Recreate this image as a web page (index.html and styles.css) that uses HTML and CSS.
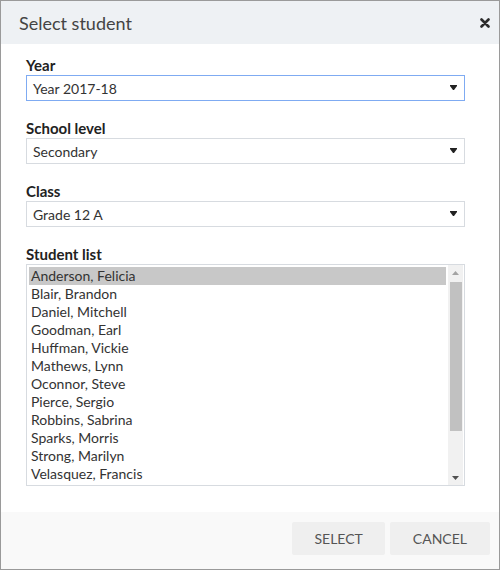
FILE: index.html
```html
<!DOCTYPE html>
<html lang="en">
<head>
<meta charset="utf-8">
<title>Select student</title>
<link rel="stylesheet" href="styles.css">
</head>
<body>
<div class="dialog">
  <div class="dialog-header">
    <span class="dialog-title">Select student</span>
    <svg class="close-icon" width="10" height="10" viewBox="0 0 10 10" aria-label="Close">
      <path d="M1.5 1.5 L8.5 8.5 M8.5 1.5 L1.5 8.5" stroke="#2b2b2b" stroke-width="2.6" stroke-linecap="round"/>
    </svg>
  </div>
  <div class="dialog-body">
    <div class="field">
      <div class="field-label">Year</div>
      <div class="select select-focused">
        <span>Year 2017-18</span>
        <svg class="select-arrow" width="7" height="6" viewBox="0 0 7 6"><path d="M0 0 H7 V1 L4 5 H3 L0 1 Z" fill="#222"/></svg>
      </div>
    </div>
    <div class="field">
      <div class="field-label">School level</div>
      <div class="select">
        <span>Secondary</span>
        <svg class="select-arrow" width="7" height="6" viewBox="0 0 7 6"><path d="M0 0 H7 V1 L4 5 H3 L0 1 Z" fill="#222"/></svg>
      </div>
    </div>
    <div class="field">
      <div class="field-label">Class</div>
      <div class="select">
        <span>Grade 12 A</span>
        <svg class="select-arrow" width="7" height="6" viewBox="0 0 7 6"><path d="M0 0 H7 V1 L4 5 H3 L0 1 Z" fill="#222"/></svg>
      </div>
    </div>
    <div class="field">
      <div class="field-label">Student list</div>
      <div class="listbox">
        <ul class="list-items">
          <li class="item selected">Anderson, Felicia</li>
          <li class="item">Blair, Brandon</li>
          <li class="item">Daniel, Mitchell</li>
          <li class="item">Goodman, Earl</li>
          <li class="item">Huffman, Vickie</li>
          <li class="item">Mathews, Lynn</li>
          <li class="item">Oconnor, Steve</li>
          <li class="item">Pierce, Sergio</li>
          <li class="item">Robbins, Sabrina</li>
          <li class="item">Sparks, Morris</li>
          <li class="item">Strong, Marilyn</li>
          <li class="item">Velasquez, Francis</li>
        </ul>
        <div class="scrollbar">
          <div class="scroll-btn">
            <svg width="7" height="4" viewBox="0 0 7 4"><path d="M3.5 0 L7 4 H0 Z" fill="#a3a3a3"/></svg>
          </div>
          <div class="scroll-track">
            <div class="scroll-thumb"></div>
          </div>
          <div class="scroll-btn">
            <svg width="7" height="4" viewBox="0 0 7 4"><path d="M0 0 H7 L3.5 4 Z" fill="#505050"/></svg>
          </div>
        </div>
      </div>
    </div>
  </div>
  <div class="dialog-footer">
    <button class="btn">SELECT</button>
    <button class="btn btn-wide">CANCEL</button>
  </div>
</div>
</body>
</html>
```
FILE: styles.css
```css
* {
  box-sizing: border-box;
}

html, body {
  margin: 0;
  padding: 0;
  background: #ffffff;
}

body {
  font-family: Lato, "Open Sans", "Liberation Sans", sans-serif;
  color: #333333;
}

.dialog {
  width: 500px;
  height: 570px;
  border: 1px solid #9a9a9a;
  display: flex;
  flex-direction: column;
  background: #ffffff;
}

.dialog-header {
  height: 43px;
  flex: none;
  background: #eef1f4;
  display: flex;
  align-items: center;
  justify-content: space-between;
  padding: 0 9px 0 18px;
}

.dialog-title {
  font-size: 18px;
  color: #444444;
}

.close-icon {
  display: block;
}

.dialog-body {
  flex: 1;
  padding: 11px 0 0 25px;
}

.field {
  margin-bottom: 17px;
}

.field-label {
  font-size: 15px;
  font-weight: bold;
  line-height: 20px;
  color: #222222;
}

.select {
  width: 439px;
  height: 26px;
  border: 1px solid #d7dbe0;
  display: flex;
  align-items: center;
  justify-content: space-between;
  padding: 0 7px 0 6px;
  font-size: 14px;
  color: #333333;
}

.select-focused {
  border-color: #7fabf2;
}

.select-arrow {
  display: block;
}

.listbox {
  width: 439px;
  height: 222px;
  border: 1px solid #d7dbe0;
  display: flex;
  overflow: hidden;
}

.list-items {
  list-style: none;
  margin: 0;
  padding: 2px 2px 2px 2px;
  flex: 1;
  overflow: hidden;
}

.item {
  height: 18px;
  line-height: 18px;
  font-size: 14px;
  padding-left: 2px;
  color: #333333;
  white-space: nowrap;
}

.item.selected {
  background: #c8c8c8;
}

.scrollbar {
  width: 15px;
  flex: none;
  background: #f1f1f1;
  display: flex;
  flex-direction: column;
  margin-right: 1px;
}

.scroll-btn {
  height: 15px;
  flex: none;
  display: flex;
  align-items: center;
  justify-content: center;
}

.scroll-btn svg {
  display: block;
}

.scroll-track {
  flex: 1;
  padding: 2px 1px 38px 2px;
}

.scroll-thumb {
  height: 149px;
  background: #c1c1c1;
}

.dialog-footer {
  height: 57px;
  flex: none;
  background: #f9f9f9;
  display: flex;
  justify-content: flex-end;
  align-items: flex-start;
  gap: 5px;
  padding: 10px 9px 0 0;
}

.btn {
  height: 33px;
  padding: 0 22px;
  border: none;
  border-radius: 2px;
  background: #efefef;
  font-family: Lato, "Open Sans", "Liberation Sans", sans-serif;
  font-size: 14px;
  color: #555555;
  cursor: pointer;
}

.btn-wide {
  padding: 0 23px;
}
```
